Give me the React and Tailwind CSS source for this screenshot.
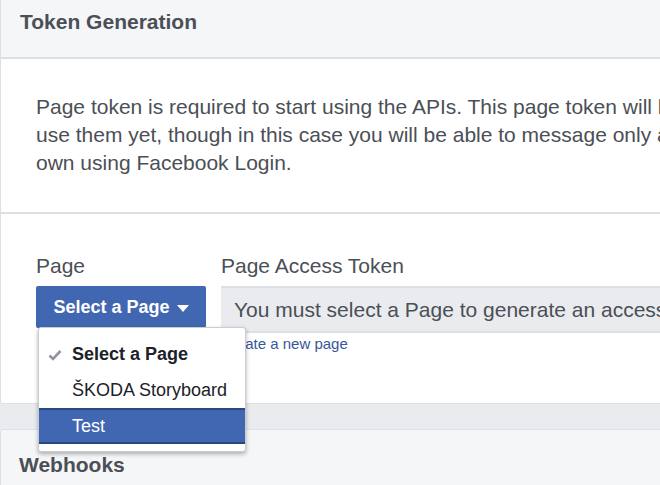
import React from 'react'

function PageSelect() {
  return (
    <div className="relative w-[170px] shrink-0">
      <button className="w-full h-[42px] bg-[#4267b2] rounded-[2px] flex items-center justify-center gap-[7px] text-white font-bold text-[18px] pt-[1px]">
        Select a Page
        <span className="w-0 h-0 border-l-[6px] border-r-[6px] border-t-[7px] border-l-transparent border-r-transparent border-t-white mt-[1px]"></span>
      </button>
      <div className="absolute top-[41px] left-[2px] z-10 w-[208px] bg-white border border-[#c9ccd1] rounded-[3px] shadow-[0_2px_4px_rgba(0,0,0,0.3)] pt-[8px] pb-[7px]">
        <div className="h-[36px] flex items-center pl-[9px]">
          <svg width="14" height="12" viewBox="0 0 14 12" className="mr-[10px] mt-[2px]">
            <path d="M1.5 6.5 L5 10 L12.5 2" fill="none" stroke="#90949c" strokeWidth="2.6" />
          </svg>
          <span className="font-bold text-[18px] text-[#1d2129]">Select a Page</span>
        </div>
        <div className="h-[36px] flex items-center pl-[33px] text-[18px] text-[#1d2129]">ŠKODA Storyboard</div>
        <div className="h-[36px] flex items-center pl-[33px] text-[18px] text-white bg-[#4267b2] border-y-2 border-[#29487d]">Test</div>
      </div>
    </div>
  )
}

export default function App() {
  return (
    <div className="w-[660px] h-[485px] overflow-hidden bg-[#e9ebee] font-['Liberation_Sans',Arial,sans-serif] text-[#4b4f56]">
      <div className="w-[720px] bg-white border border-t-0 border-[#dddfe2] rounded-b-[3px]">
        <div className="h-[59px] bg-[#f5f6f7] border-b-2 border-[#dddfe2] pl-[19px] pt-[10px]">
          <h2 className="text-[21px] leading-[24px] font-bold text-[#4b4f56]">Token Generation</h2>
        </div>
        <div className="pl-[35px] pt-[34px] pb-[35px] text-[21px] leading-[28px] border-b-2 border-[#dddfe2]">
          <p className="whitespace-nowrap">Page token is required to start using the APIs. This page token will have all messenger permissions even if your app is not approved to</p>
          <p className="whitespace-nowrap">use them yet, though in this case you will be able to message only app admins. You can also generate page tokens for the pages you don't</p>
          <p className="whitespace-nowrap">own using Facebook Login.</p>
        </div>
        <div className="pl-[35px] pt-[40px] h-[189px] flex gap-[15px]">
          <div className="flex flex-col">
            <label className="text-[21px] leading-[24px] mb-[8px]">Page</label>
            <PageSelect />
          </div>
          <div className="flex flex-col flex-1">
            <label className="text-[21px] leading-[24px] mb-[8px]">Page Access Token</label>
            <div className="h-[47px] bg-[#e9ebee] border-y-2 border-[#dddfe2] flex items-center pl-[13px] text-[21px] whitespace-nowrap">
              You must select a Page to generate an access token.
            </div>
            <a className="text-[15px] leading-[18px] text-[#365899] mt-[2px]">Create a new page</a>
          </div>
        </div>
      </div>
      <div className="w-[720px] mt-[25px] h-[80px] bg-[#f5f6f7] border border-[#dddfe2] rounded-t-[3px] pl-[18px] pt-[23px]">
        <h2 className="text-[21px] leading-[24px] font-bold text-[#4b4f56]">Webhooks</h2>
      </div>
    </div>
  )
}
